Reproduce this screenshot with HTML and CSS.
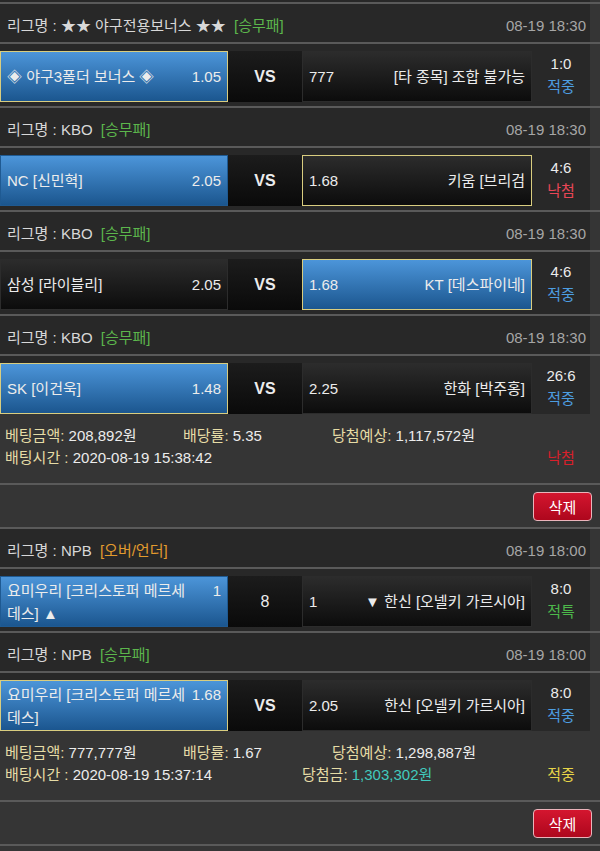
FILE: index.html
```html
<!DOCTYPE html>
<html lang="ko">
<head>
    <meta charset="UTF-8">
    <meta name="viewport" content="width=device-width, initial-scale=1.0">
    <title>베팅내역</title>
    <link rel="stylesheet" href="styles.css">
</head>
<body>

<div class="top-edge"></div>

<!-- 베팅 1 -->
<div class="slip">
    <div class="game">
        <div class="league">
            <span class="league-name">리그명 : ★★ 야구전용보너스 ★★ <span class="type type-wdl">[승무패]</span></span>
            <span class="time">08-19 18:30</span>
        </div>
        <div class="match">
            <div class="side home won picked"><span class="name">◈ 야구3폴더 보너스 ◈</span><span class="odds">1.05</span></div>
            <div class="vs">VS</div>
            <div class="side away"><span class="odds">777</span><span class="name">[타 종목] 조합 불가능</span></div>
            <div class="result"><span class="score">1:0</span><span class="status hit">적중</span></div>
        </div>
    </div>

    <div class="game">
        <div class="league">
            <span class="league-name">리그명 : KBO <span class="type type-wdl">[승무패]</span></span>
            <span class="time">08-19 18:30</span>
        </div>
        <div class="match">
            <div class="side home won"><span class="name">NC [신민혁]</span><span class="odds">2.05</span></div>
            <div class="vs">VS</div>
            <div class="side away picked"><span class="odds">1.68</span><span class="name">키움 [브리검</span></div>
            <div class="result"><span class="score">4:6</span><span class="status miss">낙첨</span></div>
        </div>
    </div>

    <div class="game">
        <div class="league">
            <span class="league-name">리그명 : KBO <span class="type type-wdl">[승무패]</span></span>
            <span class="time">08-19 18:30</span>
        </div>
        <div class="match">
            <div class="side home"><span class="name">삼성 [라이블리]</span><span class="odds">2.05</span></div>
            <div class="vs">VS</div>
            <div class="side away won picked"><span class="odds">1.68</span><span class="name">KT [데스파이네]</span></div>
            <div class="result"><span class="score">4:6</span><span class="status hit">적중</span></div>
        </div>
    </div>

    <div class="game last">
        <div class="league">
            <span class="league-name">리그명 : KBO <span class="type type-wdl">[승무패]</span></span>
            <span class="time">08-19 18:30</span>
        </div>
        <div class="match">
            <div class="side home won picked"><span class="name">SK [이건욱]</span><span class="odds">1.48</span></div>
            <div class="vs">VS</div>
            <div class="side away"><span class="odds">2.25</span><span class="name">한화 [박주홍]</span></div>
            <div class="result"><span class="score">26:6</span><span class="status hit">적중</span></div>
        </div>
    </div>

    <div class="bet">
        <div class="bet-line line-top">
            <span><span class="label">베팅금액:</span> 208,892원</span>
            <span><span class="label">배당률:</span> 5.35</span>
            <span><span class="label">당첨예상:</span> 1,117,572원</span>
        </div>
        <div class="bet-line line-bottom">
            <span><span class="label">배팅시간 :</span> 2020-08-19 15:38:42</span>
            <span></span>
            <span class="final final-miss">낙첨</span>
        </div>
    </div>

    <div class="actions">
        <button type="button" class="btn-delete">삭제</button>
    </div>
</div>

<!-- 베팅 2 -->
<div class="slip">
    <div class="game">
        <div class="league">
            <span class="league-name">리그명 : NPB <span class="type type-ou">[오버/언더]</span></span>
            <span class="time">08-19 18:00</span>
        </div>
        <div class="match">
            <div class="side home won"><span class="name">요미우리 [크리스토퍼 메르세데스] ▲</span><span class="odds">1</span></div>
            <div class="vs vs-line">8</div>
            <div class="side away"><span class="odds">1</span><span class="name">▼ 한신 [오넬키 가르시아]</span></div>
            <div class="result"><span class="score">8:0</span><span class="status special">적특</span></div>
        </div>
    </div>

    <div class="game last">
        <div class="league">
            <span class="league-name">리그명 : NPB <span class="type type-wdl">[승무패]</span></span>
            <span class="time">08-19 18:00</span>
        </div>
        <div class="match">
            <div class="side home won picked"><span class="name">요미우리 [크리스토퍼 메르세데스]</span><span class="odds">1.68</span></div>
            <div class="vs">VS</div>
            <div class="side away"><span class="odds">2.05</span><span class="name">한신 [오넬키 가르시아]</span></div>
            <div class="result"><span class="score">8:0</span><span class="status hit">적중</span></div>
        </div>
    </div>

    <div class="bet">
        <div class="bet-line line-top">
            <span><span class="label">베팅금액:</span> 777,777원</span>
            <span><span class="label">배당률:</span> 1.67</span>
            <span><span class="label">당첨예상:</span> 1,298,887원</span>
        </div>
        <div class="bet-line line-bottom">
            <span><span class="label">배팅시간 :</span> 2020-08-19 15:37:14</span>
            <span><span class="label">당첨금:</span> <span class="payout">1,303,302원</span></span>
            <span class="final final-hit">적중</span>
        </div>
    </div>

    <div class="actions">
        <button type="button" class="btn-delete">삭제</button>
    </div>
</div>

</body>
</html>
```

FILE: styles.css
```css
/* 베팅내역 */
* {
    box-sizing: border-box;
    margin: 0;
    padding: 0;
}

body {
    font-family: "Liberation Sans", "Noto Sans CJK KR", sans-serif;
    font-size: 15px;
    background-color: #353535;
    color: #ececec;
}

.top-edge {
    height: 2px;
    background-color: #282828;
    box-shadow: inset -10px 0 #353535;
}

/* 리그 헤더 */
.league {
    display: flex;
    justify-content: space-between;
    height: 40px;
    padding: 5px 14px 0 7px;
    line-height: 33px;
    border-top: 2px solid #5a5a5a;
    background-color: #282828;
    box-shadow: inset -10px 0 #353535;
    color: #d8d8d8;
}

.type {
    margin-left: 4px;
}

.type-wdl {
    color: #5cb64c;
}

.type-ou {
    color: #e39b2e;
}

.time {
    color: #a6a6a6;
}

/* 경기 */
.match {
    display: flex;
    padding: 7px 10px 4px 0;
    border-top: 2px solid #5a5a5a;
    background-color: #282828;
    box-shadow: inset -10px 0 #353535;
}

.game.last .match {
    padding-bottom: 0;
}

.side {
    display: grid;
    height: 51px;
    padding: 0 6px;
    align-content: center;
    align-items: start;
    justify-content: space-between;
    line-height: 23px;
    border: 1px solid #2c2c2c;
    background: linear-gradient(#2c2c2c, #0c0c0c);
}

.home {
    width: 228px;
    grid-template-columns: minmax(0, 190px) auto;
}

.away {
    width: 230px;
    grid-template-columns: auto minmax(0, 190px);
}

.away .name {
    text-align: right;
}

.won {
    background: linear-gradient(#4c95d9, #1b568f);
    border-color: #1f5a92;
}

.picked {
    border-color: #d9cd7f;
}

.vs {
    display: flex;
    justify-content: center;
    align-items: center;
    width: 74px;
    height: 51px;
    font-weight: bold;
    font-size: 16px;
    background: linear-gradient(#1c1c1c, #0a0a0a);
}

.vs-line {
    font-weight: normal;
}

.result {
    display: flex;
    flex-direction: column;
    justify-content: center;
    align-items: center;
    flex: 1;
    height: 51px;
    line-height: 23px;
    padding-bottom: 4px;
}

.hit {
    color: #4d9de0;
}

.miss {
    color: #ea4656;
}

.special {
    color: #4db84b;
}

/* 베팅 정보 */
.bet {
    padding: 11px 10px 14px 5px;
    line-height: 22px;
}

.bet-line {
    display: grid;
}

.line-top {
    grid-template-columns: 178px 149px 1fr;
}

.line-bottom {
    grid-template-columns: 297px 1fr 58px;
}

.label {
    color: #e6dca6;
}

.payout {
    color: #41c9bd;
}

.final {
    text-align: center;
}

.final-miss {
    color: #d8202b;
}

.final-hit {
    color: #e6d448;
}

.actions {
    display: flex;
    justify-content: flex-end;
    padding: 7px 8px 6px;
    border-top: 2px solid #5a5a5a;
}

.slip:last-child .actions {
    border-bottom: 2px solid #5a5a5a;
}

.btn-delete {
    width: 59px;
    height: 29px;
    font-family: inherit;
    font-size: 15px;
    color: #fff;
    background: linear-gradient(#d4162f, #ae071d);
    border: 1px solid #eab4bb;
    border-radius: 4px;
    cursor: pointer;
}
```
